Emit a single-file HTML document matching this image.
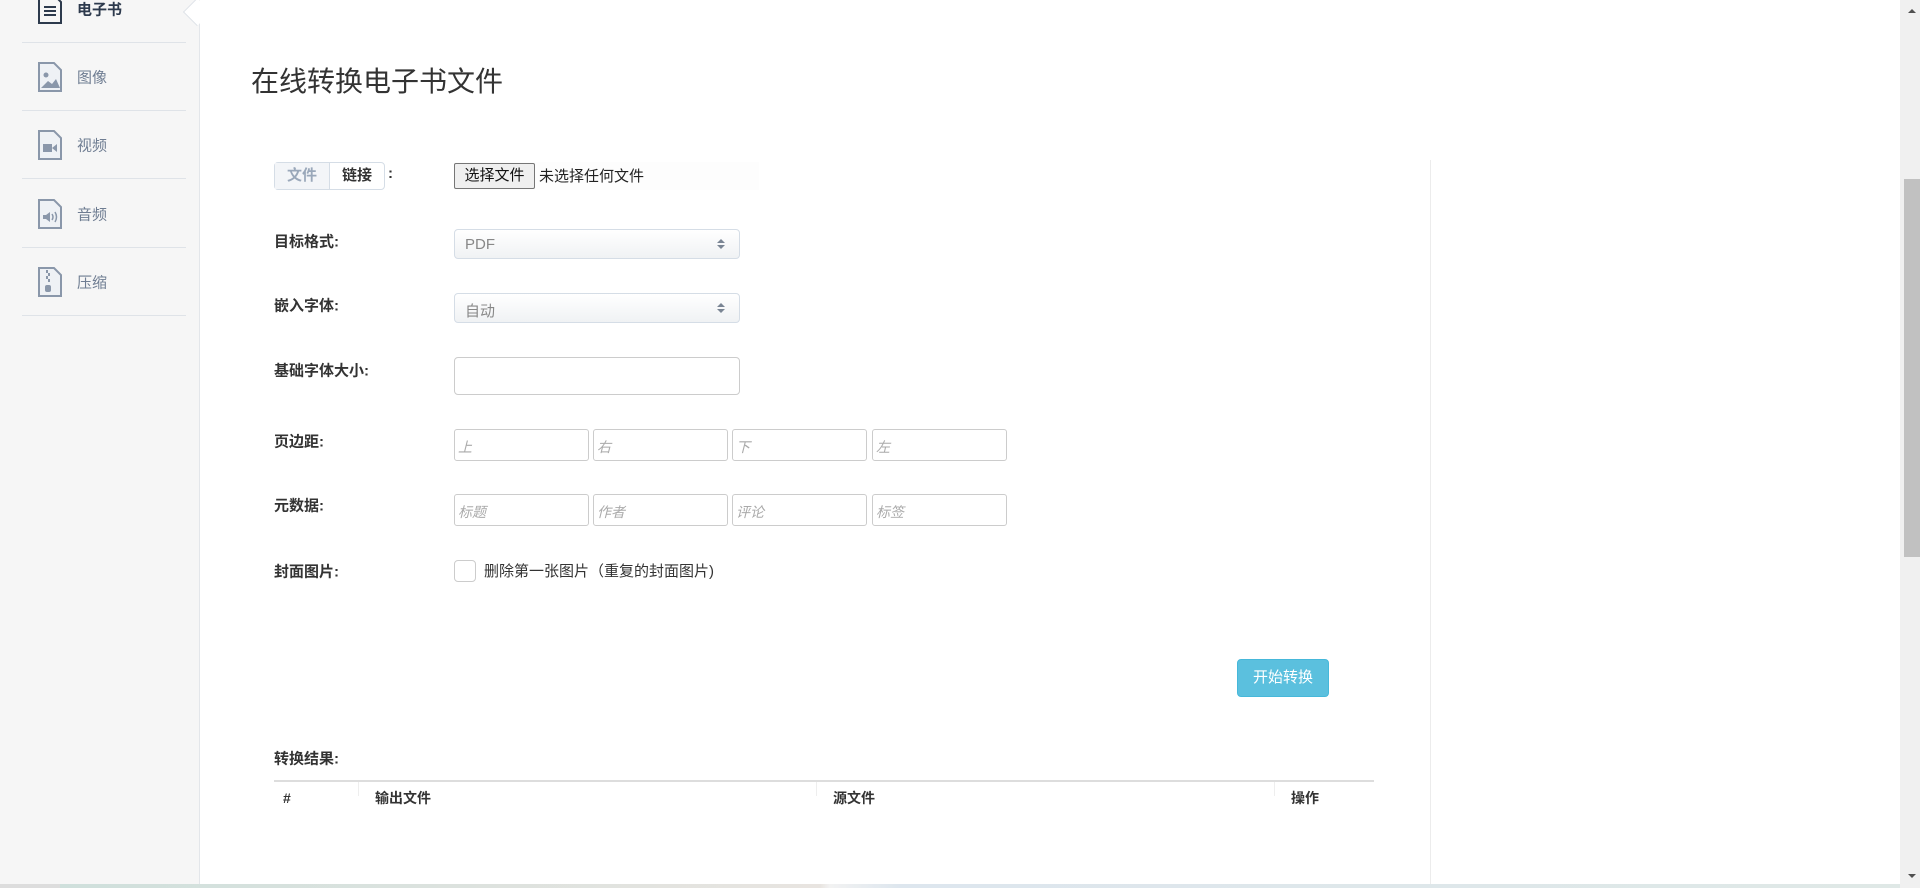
<!DOCTYPE html>
<html><head><meta charset="utf-8"><style>
*{box-sizing:border-box;margin:0;padding:0}
body{width:1920px;height:888px;overflow:hidden;background:#fff;font-family:"Liberation Sans","Noto Sans CJK SC",sans-serif;color:#333;position:relative}
.side{position:absolute;left:0;top:0;width:200px;height:888px;background:#f6f6f6;border-right:1px solid #e3e6ea}
.item{position:absolute;left:22px;width:164px;height:68px;border-bottom:1px solid #dfe3e8}
.item svg{position:absolute;left:15px;top:50%;margin-top:-15px}
.item span{position:absolute;left:55px;top:50%;transform:translateY(-50%);font-size:15px;color:#6f7d92}
.item.act span{color:#2d3a4d;font-weight:bold}
.notch{position:absolute;left:187px;top:2px;width:20px;height:20px;background:#fff;border-left:1px solid #dfe3e8;border-bottom:1px solid #dfe3e8;transform:rotate(45deg)}
h1{position:absolute;left:251px;top:60px;font-size:28px;font-weight:normal;color:#333}
.lbl{position:absolute;left:274px;font-size:15px;font-weight:bold;color:#333;transform:translateY(-50%)}
.sel{position:absolute;left:454px;width:286px;height:30px;border:1px solid #d5dde6;border-radius:4px;background:linear-gradient(#fff,#f0f2f4);font-size:15px;color:#888;padding:6px 10px}
.sel:after{content:"";position:absolute;right:14px;top:9px;border:4px solid transparent;border-bottom:4px solid #7a8594;border-top:none}
.sel:before{content:"";position:absolute;right:14px;top:15px;border:4px solid transparent;border-top:4px solid #7a8594;border-bottom:none}
.inp{position:absolute;height:32px;width:135px;border:1px solid #ccc;border-radius:3px;font-size:14px;font-style:italic;color:#aaa;padding:7px 3px}
.vl{position:absolute;left:1430px;top:160px;width:1px;height:728px;background:#ececec}
</style></head><body>
<div class="side">
 <div class="item act" style="top:-25px"><svg width="26" height="30" viewBox="0 0 26 30"><path d="M2 1h15l7 7v21H2z" fill="none" stroke="#2d3a4d" stroke-width="2"/><path d="M7 13h12M7 17h12M7 21h12" stroke="#2d3a4d" stroke-width="2"/></svg><span>电子书</span></div>
 <div class="item" style="top:43px"><svg width="26" height="30" viewBox="0 0 26 30"><path d="M2 1h15l7 7v21H2z" fill="#eef1f5" stroke="#8a97aa" stroke-width="2"/><circle cx="9" cy="13" r="2.5" fill="#8a97aa"/><path d="M4 26l7-7 4 3 4-5 4 9z" fill="#8a97aa"/></svg><span>图像</span></div>
 <div class="item" style="top:111px"><svg width="26" height="30" viewBox="0 0 26 30"><path d="M2 1h15l7 7v21H2z" fill="#eef1f5" stroke="#8a97aa" stroke-width="2"/><rect x="6" y="14" width="9" height="8" fill="#8a97aa"/><path d="M15 18l5-4v8z" fill="#8a97aa"/></svg><span>视频</span></div>
 <div class="item" style="top:180px"><svg width="26" height="30" viewBox="0 0 26 30"><path d="M2 1h15l7 7v21H2z" fill="#eef1f5" stroke="#8a97aa" stroke-width="2"/><path d="M6 16h3l4-3v10l-4-3H6z" fill="#8a97aa"/><path d="M15 15q2 3 0 6M18 13q3 5 0 10" fill="none" stroke="#8a97aa" stroke-width="1.5"/></svg><span>音频</span></div>
 <div class="item" style="top:248px"><svg width="26" height="30" viewBox="0 0 26 30"><path d="M2 1h15l7 7v21H2z" fill="#eef1f5" stroke="#8a97aa" stroke-width="2"/><path d="M10 3v3M12 6v3M10 9v3M12 12v3" stroke="#8a97aa" stroke-width="2"/><rect x="8" y="18" width="6" height="7" rx="2" fill="#8a97aa"/></svg><span>压缩</span></div>
</div>
<div class="notch"></div>
<h1>在线转换电子书文件</h1>

<div style="position:absolute;left:274px;top:162px;width:111px;height:28px;border:1px solid #d5dde6;border-radius:4px;font-size:15px;font-weight:bold;display:flex">
 <div style="width:55px;text-align:center;line-height:26px;color:#9aa8ba;background:#f3f5f8;border-right:1px solid #d5dde6">文件</div>
 <div style="flex:1;text-align:center;line-height:26px;color:#333">链接</div>
</div>
<div style="position:absolute;left:388px;top:165px;font-size:15px;font-weight:bold">:</div>
<div style="position:absolute;left:454px;top:162px;width:305px;height:28px;background:#fdfdfd"></div>
<div style="position:absolute;left:454px;top:163px;width:81px;height:26px;border:1px solid #767676;border-radius:2px;background:#efefef;font-size:15px;text-align:center;line-height:24px;color:#111">选择文件</div>
<div style="position:absolute;left:539px;top:165px;font-size:15px;color:#222">未选择任何文件</div>

<div class="lbl" style="top:241px">目标格式:</div>
<div class="sel" style="top:229px">PDF</div>
<div class="lbl" style="top:305px">嵌入字体:</div>
<div class="sel" style="top:293px">自动</div>
<div class="lbl" style="top:370px">基础字体大小:</div>
<div style="position:absolute;left:454px;top:357px;width:286px;height:38px;border:1px solid #ccc;border-radius:4px"></div>

<div class="lbl" style="top:441px">页边距:</div>
<div class="inp" style="left:454px;top:429px">上</div>
<div class="inp" style="left:593px;top:429px">右</div>
<div class="inp" style="left:732px;top:429px">下</div>
<div class="inp" style="left:872px;top:429px">左</div>
<div class="lbl" style="top:505px">元数据:</div>
<div class="inp" style="left:454px;top:494px">标题</div>
<div class="inp" style="left:593px;top:494px">作者</div>
<div class="inp" style="left:732px;top:494px">评论</div>
<div class="inp" style="left:872px;top:494px">标签</div>
<div class="lbl" style="top:571px">封面图片:</div>
<div style="position:absolute;left:454px;top:560px;width:22px;height:22px;border:1px solid #ccc;border-radius:4px"></div>
<div style="position:absolute;left:484px;top:560px;font-size:15px;color:#333">删除第一张图片（重复的封面图片)</div>

<div style="position:absolute;left:1237px;top:659px;width:92px;height:38px;background:#5bc0de;border:1px solid #46b8da;border-radius:4px;color:#fff;font-size:15px;text-align:center;line-height:36px">开始转换</div>

<div class="lbl" style="top:758px">转换结果:</div>
<div style="position:absolute;left:274px;top:780px;width:1100px;height:2px;background:#ddd"></div>
<div style="position:absolute;left:358px;top:782px;width:1px;height:14px;background:#eee"></div>
<div style="position:absolute;left:816px;top:782px;width:1px;height:14px;background:#eee"></div>
<div style="position:absolute;left:1274px;top:782px;width:1px;height:14px;background:#eee"></div>
<div class="lbl" style="top:798px;left:283px;font-size:14px">#</div>
<div class="lbl" style="top:798px;left:375px;font-size:14px">输出文件</div>
<div class="lbl" style="top:798px;left:833px;font-size:14px">源文件</div>
<div class="lbl" style="top:798px;left:1291px;font-size:14px">操作</div>

<div class="vl"></div>
<div style="position:absolute;left:1900px;top:0;width:20px;height:888px;background:#f0f0f0"></div>
<div style="position:absolute;left:1904px;top:179px;width:16px;height:378px;background:#c1c1c1"></div>
<div style="position:absolute;left:1908px;top:9px;border:4px solid transparent;border-bottom:4px solid #505050;border-top:none"></div>
<div style="position:absolute;left:1908px;top:874px;border:4px solid transparent;border-top:4px solid #505050;border-bottom:none"></div>
<div style="position:absolute;left:0;top:884px;width:1900px;height:4px;background:linear-gradient(90deg,#ddd 0,#ddd 60px,#cfe0dc 60px,#e8e4e0 820px,#f2f2f2 830px,#dde6ee 900px,#dfe8e6 1900px)"></div>
</body></html>
